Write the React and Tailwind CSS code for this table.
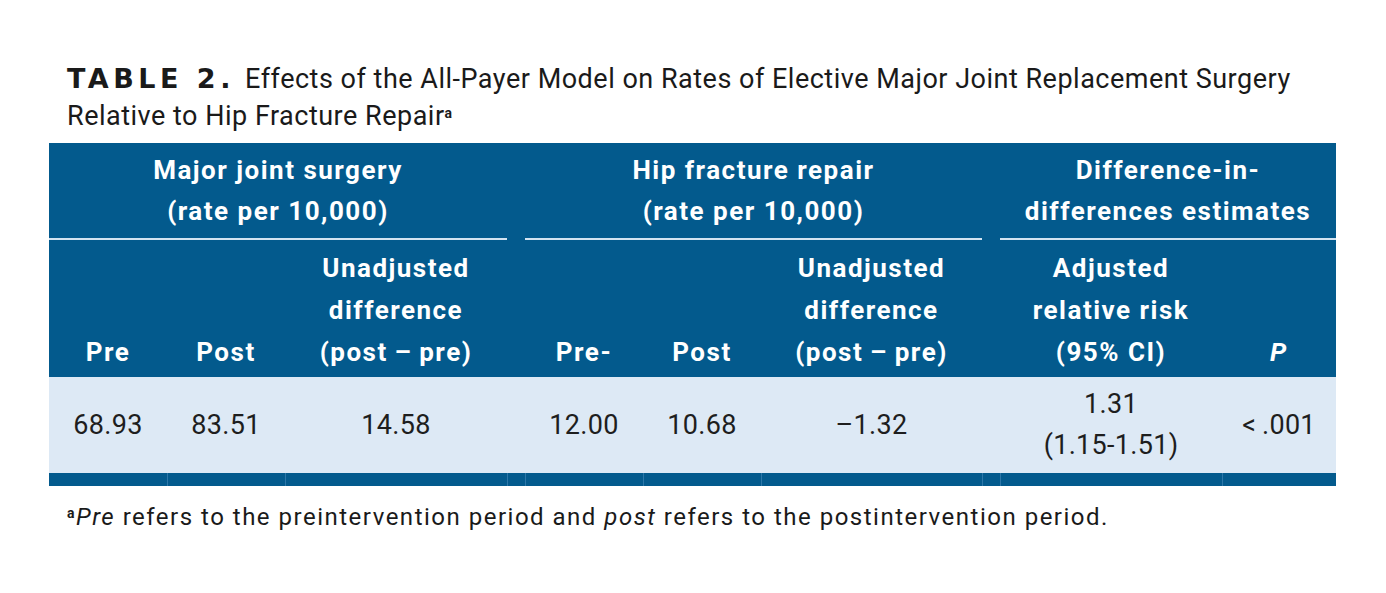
import React from 'react';

const font = { fontFamily: 'Roboto, "Liberation Sans", sans-serif' };

const cols = 'grid grid-cols-[118px_118px_222px_18px_118px_118px_221px_18px_222px_114px]';

function GroupHead({ lines, span }) {
  return (
    <div className={`${span} flex flex-col items-center justify-center h-[97px] border-b-2 border-[#d3e3f1] text-[26px] leading-[41px] font-bold tracking-[1.5px] text-white`}>
      {lines.map((l, i) => <div key={i}>{l}</div>)}
    </div>
  );
}

function SubHead({ lines }) {
  return (
    <div className="flex flex-col items-center justify-end h-[137px] pb-[4px] text-[26px] leading-[42px] font-bold tracking-[1.5px] text-white">
      {lines.map((l, i) => <div key={i}>{l}</div>)}
    </div>
  );
}

function Cell({ children }) {
  return (
    <div className="flex flex-col items-center justify-center h-[96px] text-[27px] leading-[41px] text-[#1e1e1e] tracking-[0.3px]">
      {children}
    </div>
  );
}

export default function App() {
  const subs = [
    ['Pre'], ['Post'], ['Unadjusted', 'difference', '(post\u2009\u2013\u2009pre)'], [],
    ['Pre-'], ['Post'], ['Unadjusted', 'difference', '(post\u2009\u2013\u2009pre)'], [],
    ['Adjusted', 'relative risk', '(95% CI)'], [<i key="p">P</i>],
  ];
  return (
    <div className="w-[1386px] h-[593px] bg-white pt-[60px]" style={font}>
      <div className="ml-[67px] text-[27px] leading-[37px] tracking-[0.5px] text-[#1a1a1a]">
        <span className="font-bold text-[27px] leading-[37px] tracking-[4.5px] mr-[3px]" style={{ fontFamily: '"DejaVu Sans", sans-serif' }}>TABLE 2.</span>{' '}
        Effects of the All-Payer Model on Rates of Elective Major Joint Replacement Surgery
        <br />
        Relative to Hip Fracture Repair<sup className="text-[14px] font-bold">a</sup>
      </div>

      <div className="ml-[49px] mt-[8px] w-[1287px]">
        <div className={`${cols} bg-[#035a8d]`}>
          <GroupHead span="col-span-3" lines={['Major joint surgery', '(rate per 10,000)']} />
          <div />
          <GroupHead span="col-span-3" lines={['Hip fracture repair', '(rate per 10,000)']} />
          <div />
          <GroupHead span="col-span-2" lines={['Difference-in-', 'differences estimates']} />
          {subs.map((s, i) => <SubHead key={i} lines={s} />)}
        </div>

        <div className={`${cols} bg-[#dde9f5]`}>
          <Cell>68.93</Cell>
          <Cell>83.51</Cell>
          <Cell>14.58</Cell>
          <div />
          <Cell>12.00</Cell>
          <Cell>10.68</Cell>
          <Cell>{'\u20131.32'}</Cell>
          <div />
          <Cell>
            <div>1.31</div>
            <div>(1.15-1.51)</div>
          </Cell>
          <Cell>{'<\u2009.001'}</Cell>
        </div>

        <div className={`${cols} bg-[#035a8d] h-[13px]`}>
          <div />
          {Array.from({ length: 9 }).map((_, i) => (
            <div key={i} className="border-l border-[#2d77a8]" />
          ))}
        </div>
      </div>

      <div className="ml-[67px] mt-[16px] text-[24px] leading-[30px] tracking-[1.5px] text-[#1a1a1a]">
        <sup className="text-[14px] font-bold">a</sup>
        <i>Pre</i> refers to the preintervention period and <i>post</i> refers to the postintervention period.
      </div>
    </div>
  );
}
